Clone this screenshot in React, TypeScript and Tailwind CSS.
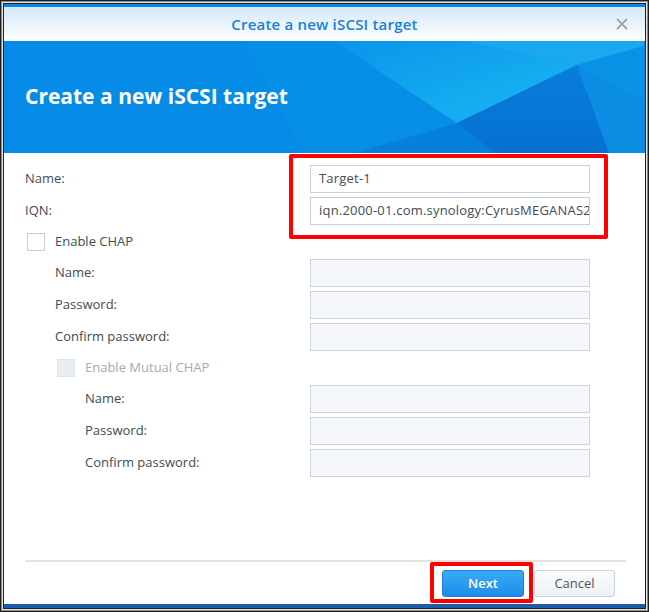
import React from "react";

const font = { fontFamily: '"Open Sans", "Noto Sans", Arial, sans-serif' };

function Input({ value, disabled }: { value?: string; disabled?: boolean }) {
  return (
    <div
      className={
        "w-[280px] h-[28px] shrink-0 border flex items-center px-[8px] overflow-hidden whitespace-nowrap text-[13px] tracking-[0.2px] " +
        (disabled ? "bg-[#f5f7fa] border-[#ccd5de]" : "bg-white border-[#c8d0d8] text-[#414b55]")
      }
    >
      {value}
    </div>
  );
}

function Row({ label, indent, value, disabled }: { label: string; indent: number; value?: string; disabled?: boolean }) {
  return (
    <div className="flex items-center h-[28px]">
      <div className={"flex-1 text-[13px] text-[#414b55] " + (indent === 1 ? "pl-[30px]" : indent === 2 ? "pl-[60px]" : "")}>{label}</div>
      <Input value={value} disabled={disabled} />
    </div>
  );
}

function CheckRow({ label, indent, disabled }: { label: string; indent: number; disabled?: boolean }) {
  return (
    <div className={"flex items-center h-[26px] " + (indent === 1 ? "pl-[32px]" : "pl-[2px]")}>
      <div
        className={
          "w-[18px] h-[18px] border " +
          (disabled ? "bg-[#e8edf2] border-[#dde3ea]" : "bg-white border-[#c4cdd6]")
        }
      />
      <div className={"ml-[10px] text-[13px] " + (disabled ? "text-[#a3abb3]" : "text-[#414b55]")}>{label}</div>
    </div>
  );
}

export default function App() {
  return (
    <div className="w-[649px] h-[612px] bg-[#1e1e1e] p-px" style={font}>
      <div className="w-full h-full bg-[#8c8c8c] p-px">
        <div className="w-full h-full bg-[#e4e4e4] p-px">
          <div className="w-full h-full bg-[#202020] p-px">
            <div className="relative w-full h-full bg-white flex flex-col overflow-hidden">
              {/* top blue line */}
              <div className="h-[3px] bg-[#0a86e6] shrink-0" />
              {/* title bar */}
              <div className="relative h-[34px] shrink-0 bg-gradient-to-b from-[#d3e8f8] to-white flex items-center justify-center">
                <div className="text-[15px] font-semibold tracking-[0.2px] text-[#1a80d8]">Create a new iSCSI target</div>
                <svg className="absolute right-[17px] top-[11px]" width="12" height="12" viewBox="0 0 12 12">
                  <path d="M1 1 L11 11 M11 1 L1 11" stroke="#9ea4aa" strokeWidth="1.8" />
                </svg>
              </div>
              {/* banner */}
              <div className="relative h-[112px] shrink-0 bg-[#068ce7] flex items-center pl-[21px] overflow-hidden">
                <svg className="absolute inset-0" width="640" height="112" viewBox="0 0 640 112" preserveAspectRatio="none">
                  <defs>
                    <linearGradient id="g1" x1="0" y1="0" x2="1" y2="1">
                      <stop offset="0" stopColor="#0a94ea" />
                      <stop offset="0.7" stopColor="#16aef0" />
                      <stop offset="1" stopColor="#0c9ce9" />
                    </linearGradient>
                    <linearGradient id="g2" x1="0" y1="0" x2="0" y2="1">
                      <stop offset="0" stopColor="#087ed9" />
                      <stop offset="1" stopColor="#0670d0" />
                    </linearGradient>
                  </defs>
                  <polygon points="240,0 460,0 573,24 453,82 350,112 300,112" fill="#078fe8" />
                  <polygon points="330,0 460,0 573,24 453,82" fill="url(#g1)" />
                  <polygon points="460,0 640,0 640,5 573,24" fill="#1aa9f0" />
                  <polygon points="573,24 640,5 640,112 605,112" fill="#0a92e6" />
                  <polygon points="573,24 605,112 490,112 453,82" fill="url(#g2)" />
                  <polygon points="453,82 490,112 350,112" fill="#0680dc" />
                  <polygon points="573,24 640,60 640,112 605,112" fill="#0b8ae2" opacity="0.6" />
                </svg>
                <div className="relative text-[21px] font-bold text-white">Create a new iSCSI target</div>
              </div>
              {/* form */}
              <div className="flex flex-col gap-[4px] pt-[12px] pl-[21px] pr-[55px]">
                <Row label="Name:" indent={0} value="Target-1" />
                <Row label="IQN:" indent={0} value="iqn.2000-01.com.synology:CyrusMEGANAS2" />
                <CheckRow label="Enable CHAP" indent={0} />
                <Row label="Name:" indent={1} disabled />
                <Row label="Password:" indent={1} disabled />
                <Row label="Confirm password:" indent={1} disabled />
                <CheckRow label="Enable Mutual CHAP" indent={1} disabled />
                <Row label="Name:" indent={2} disabled />
                <Row label="Password:" indent={2} disabled />
                <Row label="Confirm password:" indent={2} disabled />
              </div>
              {/* footer */}
              <div className="mt-auto">
                <div className="ml-[21px] mr-[19px] h-[2px] bg-[#e3e3e3]" />
                <div className="flex justify-end gap-[10px] pr-[30px] pt-[8px] pb-[7px]">
                  <div className="w-[82px] h-[27px] rounded-[3px] border border-[#1c82d6] bg-gradient-to-b from-[#38abf6] to-[#1d8de8] flex items-center justify-center text-[13px] font-semibold text-white">
                    Next
                  </div>
                  <div className="w-[81px] h-[27px] rounded-[3px] border border-[#c8d2dc] bg-gradient-to-b from-[#fafcfd] to-[#edf1f5] flex items-center justify-center text-[13px] text-[#4a5663]">
                    Cancel
                  </div>
                </div>
              </div>
              {/* bottom blue bar */}
              <div className="h-[4px] bg-[#1f5bab] shrink-0" />
              {/* annotations */}
              <div className="absolute left-[285px] top-[150px] w-[319px] h-[85px] border-[4px] border-[#ff0000] rounded-[2px]" />
              <div className="absolute left-[426px] top-[558px] w-[103px] h-[41px] border-[4px] border-[#ff0000] rounded-[2px]" />
            </div>
          </div>
        </div>
      </div>
    </div>
  );
}
